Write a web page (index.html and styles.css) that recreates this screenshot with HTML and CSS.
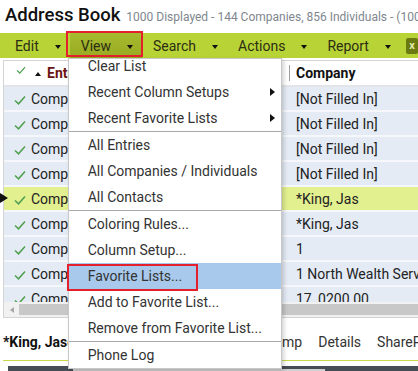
FILE: index.html
```html
<!DOCTYPE html>
<html lang="en">
<head>
  <meta charset="UTF-8" />
  <meta name="viewport" content="width=device-width, initial-scale=1.0"/>
  <title>Address Book</title>
  <link rel="stylesheet" href="styles.css">
</head>
<body>
  <header class="title-bar">
    <h1>Address Book</h1>
    <span class="summary">1000 Displayed - 144 Companies, 856 Individuals - (1000 Selected)</span>
  </header>

  <nav class="toolbar">
    <div class="tb-item">Edit <span class="caret"></span></div>
    <div class="tb-item open">View <span class="caret"></span>
      <span class="callout"></span>
      <ul class="menu">
        <li>Clear List</li>
        <li class="sub">Recent Column Setups</li>
        <li class="sub">Recent Favorite Lists</li>
        <li class="sep"></li>
        <li>All Entries</li>
        <li>All Companies / Individuals</li>
        <li>All Contacts</li>
        <li class="sep"></li>
        <li>Coloring Rules...</li>
        <li>Column Setup...</li>
        <li class="hl">Favorite Lists...<span class="callout"></span></li>
        <li>Add to Favorite List...</li>
        <li>Remove from Favorite List...</li>
        <li class="sep"></li>
        <li>Phone Log</li>
      </ul>
    </div>
    <div class="tb-item">Search <span class="caret"></span></div>
    <div class="tb-item">Actions <span class="caret"></span></div>
    <div class="tb-item">Report <span class="caret"></span></div>
    <div class="excel">x</div>
  </nav>

  <div class="grid">
    <div class="grid-head">
      <div class="hcell first">
        <svg class="check small" viewBox="0 0 12 10"><path d="M1 5.5 4.5 8.8 11 1.5"/></svg>
        <span class="sort-up"></span>
        <span class="sorted">Entries</span>
      </div>
      <div class="hcell"><span class="col-title">Company</span></div>
    </div>

    <div class="grid-body">
      <div class="row">
        <div class="cell name"><svg class="check" viewBox="0 0 12 10"><path d="M1 5.5 4.5 8.8 11 1.5"/></svg>Company 1</div>
        <div class="cell">[Not Filled In]</div>
      </div>
      <div class="row">
        <div class="cell name"><svg class="check" viewBox="0 0 12 10"><path d="M1 5.5 4.5 8.8 11 1.5"/></svg>Company 2</div>
        <div class="cell">[Not Filled In]</div>
      </div>
      <div class="row">
        <div class="cell name"><svg class="check" viewBox="0 0 12 10"><path d="M1 5.5 4.5 8.8 11 1.5"/></svg>Company 3</div>
        <div class="cell">[Not Filled In]</div>
      </div>
      <div class="row">
        <div class="cell name"><svg class="check" viewBox="0 0 12 10"><path d="M1 5.5 4.5 8.8 11 1.5"/></svg>Company 4</div>
        <div class="cell">[Not Filled In]</div>
      </div>
      <div class="row selected">
        <span class="pointer"></span>
        <div class="cell name"><svg class="check" viewBox="0 0 12 10"><path d="M1 5.5 4.5 8.8 11 1.5"/></svg>Company 5</div>
        <div class="cell">*King, Jas</div>
      </div>
      <div class="row">
        <div class="cell name"><svg class="check" viewBox="0 0 12 10"><path d="M1 5.5 4.5 8.8 11 1.5"/></svg>Company 6</div>
        <div class="cell">*King, Jas</div>
      </div>
      <div class="row">
        <div class="cell name"><svg class="check" viewBox="0 0 12 10"><path d="M1 5.5 4.5 8.8 11 1.5"/></svg>Company 7</div>
        <div class="cell">1</div>
      </div>
      <div class="row">
        <div class="cell name"><svg class="check" viewBox="0 0 12 10"><path d="M1 5.5 4.5 8.8 11 1.5"/></svg>Company 8</div>
        <div class="cell">1 North Wealth Services</div>
      </div>
      <div class="row">
        <div class="cell name"><svg class="check" viewBox="0 0 12 10"><path d="M1 5.5 4.5 8.8 11 1.5"/></svg>Company 9</div>
        <div class="cell">17_0200.00</div>
      </div>
    </div>

    <div class="hscroll">
      <span class="arrow-left"></span>
      <span class="thumb"></span>
    </div>
  </div>

  <div class="detail-bar">
    <strong class="contact">*King, Jason</strong>
    <div class="tabs">
      <span>Comp</span>
      <span>Details</span>
      <span>SharePoint</span>
    </div>
  </div>
  <div class="footer-bar"><span class="footer-tab"></span></div>
</body>
</html>
```

FILE: styles.css
```css
body {
  font-family: Roboto, "Noto Sans", sans-serif;
  font-size: 14px;
  color: #333;
  background: #fff;
  margin: 0;
  width: 418px;
  height: 371px;
  overflow: hidden;
}

/* title */
.title-bar {
  display: flex;
  align-items: baseline;
  gap: 6px;
  height: 33px;
  box-sizing: border-box;
  padding: 3px 0 0 5px;
  white-space: nowrap;
  overflow: hidden;
}

h1 {
  margin: 0;
  font-size: 18.5px;
  font-weight: 500;
  line-height: 24px;
  color: #111;
}

.summary {
  font-size: 12px;
  color: #80868e;
}

/* toolbar */
.toolbar {
  position: relative;
  z-index: 2;
  display: flex;
  height: 25px;
  padding-left: 4px;
  background: #b8d336;
}

.tb-item {
  position: relative;
  display: flex;
  align-items: center;
  gap: 16px;
  padding: 0 9px 0 11px;
  color: #2b2d12;
  white-space: nowrap;
}

.tb-item.open {
  background: linear-gradient(#a7bb2f, #97aa22);
}

.caret {
  width: 0;
  height: 0;
  margin-top: 3px;
  border-left: 3.5px solid transparent;
  border-right: 3.5px solid transparent;
  border-top: 4px solid #111;
}

.callout {
  position: absolute;
  left: -4px;
  right: -1px;
  top: -2px;
  bottom: 1px;
  border: 2px solid #e3202c;
  pointer-events: none;
}

.excel {
  align-self: center;
  width: 14px;
  height: 16px;
  margin-left: 6px;
  border-radius: 2px;
  background: #6a7a10;
  color: #dfe8a8;
  font-size: 11px;
  font-weight: bold;
  line-height: 15px;
  text-align: center;
}

/* view menu */
.menu {
  position: absolute;
  top: 100%;
  left: -2px;
  z-index: 5;
  width: 212px;
  margin: 0;
  padding: 0;
  list-style: none;
  background: #fff;
  border: 1px solid #c8c8c8;
  box-shadow: 2px 2px 4px rgba(0,0,0,0.18);
}

.menu li {
  position: relative;
  height: 26px;
  line-height: 26px;
  padding-left: 19px;
  color: #333;
  white-space: nowrap;
}

.menu li:first-child {
  height: 20px;
  line-height: 14px;
}

.menu li.sep {
  height: 0;
  padding: 0;
  border-top: 1px solid #a8a8a8;
}

.menu li.sub::after {
  content: "";
  position: absolute;
  right: 6px;
  top: 9px;
  border-top: 4px solid transparent;
  border-bottom: 4px solid transparent;
  border-left: 5px solid #111;
}

.menu li.hl {
  background: #a8c9eb;
}

.menu li.hl .callout {
  left: -2px;
  right: auto;
  width: 127px;
  top: 1px;
  bottom: -2px;
}

/* grid */
.grid {
  margin: 2px 0 0 3px;
  border: 1px solid #d4d4d4;
  border-right: none;
}

.grid-head {
  display: grid;
  grid-template-columns: 285px 1fr;
  height: 24px;
  align-items: center;
  background: #fff;
}

.hcell {
  display: flex;
  align-items: center;
  font-weight: bold;
  color: #111;
  white-space: nowrap;
}

.hcell.first {
  padding-left: 12px;
}

.check {
  width: 12px;
  height: 10px;
  flex: none;
  fill: none;
  stroke: #4e9f4e;
  stroke-width: 1.5;
}

.check.small {
  width: 10px;
  height: 8px;
  margin-top: -6px;
}

.sort-up {
  width: 0;
  height: 0;
  margin: 1px 6px 0 9px;
  border-left: 3px solid transparent;
  border-right: 3px solid transparent;
  border-bottom: 4px solid #111;
}

.sorted {
  color: #6b1414;
}

.col-title {
  border-left: 1px solid #a0a0a0;
  padding-left: 6px;
  line-height: 16px;
}

.grid-body {
  height: 217px;
  overflow-x: visible;
  overflow-y: clip;
}

.row {
  position: relative;
  display: grid;
  grid-template-columns: 285px 1fr;
  height: 23px;
  align-items: center;
  background: #e4ebf5;
  border-top: 2px solid #f5f7fa;
  color: #222;
  white-space: nowrap;
}

.row:first-child {
  border-top-color: #e2e4e8;
}

.row.selected {
  background: #e3f08f;
}

.pointer {
  position: absolute;
  left: -4px;
  top: 6px;
  border-top: 5px solid transparent;
  border-bottom: 5px solid transparent;
  border-left: 8px solid #111;
}

.cell {
  overflow: hidden;
  padding-left: 7px;
}

.cell.name {
  display: flex;
  align-items: center;
  gap: 5px;
  padding-left: 10px;
}

.cell.name .check {
  margin-top: 2px;
}

.hscroll {
  display: flex;
  align-items: center;
  height: 15px;
  background: #f1f1f1;
}

.arrow-left {
  margin: 0 5px 0 6px;
  border-top: 3.5px solid transparent;
  border-bottom: 3.5px solid transparent;
  border-right: 4px solid #a8a8a8;
}

.thumb {
  flex: 1;
  height: 11px;
  background: #c8c8c8;
}

/* bottom detail */
.detail-bar {
  display: flex;
  margin-left: 3px;
  padding: 14px 0 8px;
  line-height: 20px;
  border-bottom: 1px solid #c8d74a;
  white-space: nowrap;
  overflow: hidden;
}

.contact {
  flex: 0 0 262px;
  color: #111;
}

.tabs {
  display: flex;
  gap: 16px;
  color: #333;
}

.footer-bar {
  display: flex;
  align-items: flex-end;
  height: 5px;
  margin: 5px 0 0 8px;
  background: #464c53;
}

.footer-tab {
  width: 252px;
  height: 2px;
  margin-left: 65px;
  background: #d0d0d0;
}
```
